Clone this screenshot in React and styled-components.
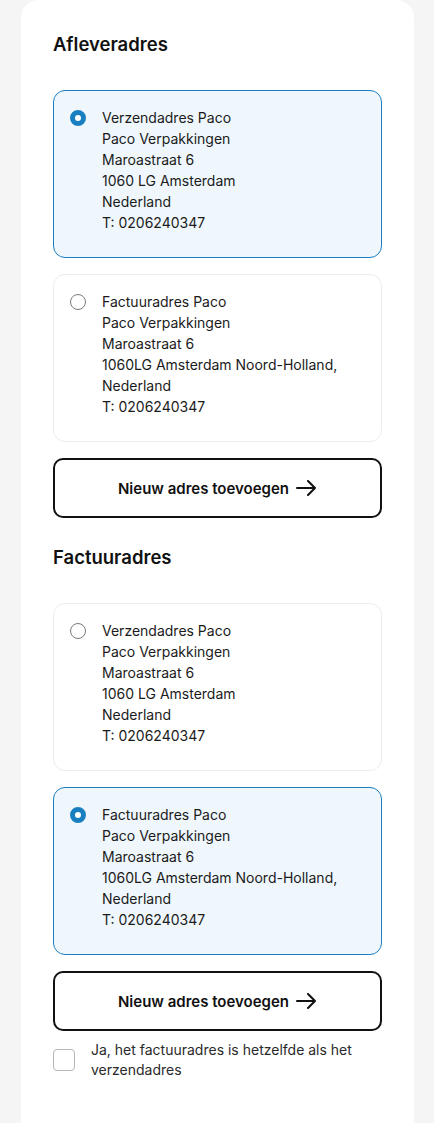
import styled, { createGlobalStyle } from 'styled-components'

const GlobalStyle = createGlobalStyle`
    body {
        margin: 0;
        background: #f5f5f5;
        font-family: Inter, "Noto Sans", sans-serif;
        color: #1b1b1b;
    }
`

const Page = styled.div`
    padding: 0 20px 0 21px;
`

const Card = styled.div`
    background: #fff;
    border-radius: 18px 18px 0 0;
    padding: 32px 32px 48px;
    display: flex;
    flex-direction: column;
`

const Heading = styled.h2`
    margin: 0 0 34px;
    font-size: 18.5px;
    line-height: 24px;
    font-weight: 600;
    color: #111;
`

const OptionList = styled.div`
    display: flex;
    flex-direction: column;
    gap: 16px;
`

const Option = styled.label`
    display: flex;
    gap: 16px;
    padding: 16px 16px 24px 16px;
    border: 1px solid ${p => (p.$selected ? '#1a7fc1' : '#ececec')};
    background: ${p => (p.$selected ? '#eff7fd' : '#fff')};
    border-radius: 12px;
    cursor: pointer;
`

const Radio = styled.span`
    flex: none;
    box-sizing: border-box;
    width: 16px;
    height: 16px;
    margin-top: 3px;
    border-radius: 50%;
    border: ${p => (p.$checked ? '5px solid #1a7fc1' : '1px solid #7a7a7a')};
    background: #fff;
`

const Address = styled.div`
    font-size: 14px;
    line-height: 21px;
    color: #1b1b1b;
`

const AddButton = styled.button`
    margin: 16px 0 0;
    height: 60px;
    width: 100%;
    display: flex;
    align-items: center;
    justify-content: center;
    gap: 6px;
    background: #fff;
    border: 2px solid #111;
    border-radius: 10px;
    font-family: inherit;
    font-size: 15px;
    font-weight: 600;
    color: #111;
    cursor: pointer;
`

const Section = styled.section`
    display: flex;
    flex-direction: column;
    & + & {
        margin-top: 27px;
    }
`

const CheckRow = styled.label`
    margin-top: 9px;
    display: flex;
    align-items: center;
    gap: 16px;
    font-size: 14px;
    line-height: 20px;
    color: #2a2a2a;
`

const CheckBox = styled.span`
    flex: none;
    box-sizing: border-box;
    width: 22px;
    height: 22px;
    border: 1px solid #b5b5b5;
    border-radius: 4px;
    background: #fff;
`

const Arrow = () => (
    <svg width="22" height="16" viewBox="0 0 22 16" fill="none" stroke="#111" strokeWidth="2" strokeLinecap="round" strokeLinejoin="round">
        <path d="M2 8h18M13 1l7 7-7 7" />
    </svg>
)

const shipping = ['Verzendadres Paco', 'Paco Verpakkingen', 'Maroastraat 6', '1060 LG Amsterdam', 'Nederland', 'T: 0206240347']
const billing = ['Factuuradres Paco', 'Paco Verpakkingen', 'Maroastraat 6', '1060LG Amsterdam Noord-Holland,', 'Nederland', 'T: 0206240347']

function AddressOption({ lines, selected }) {
    return (
        <Option $selected={selected}>
            <Radio $checked={selected} />
            <Address>
                {lines.map(l => (
                    <div key={l}>{l}</div>
                ))}
            </Address>
        </Option>
    )
}

function App() {
    return (
        <Page>
            <GlobalStyle />
            <Card>
                <Section>
                    <Heading>Afleveradres</Heading>
                    <OptionList>
                        <AddressOption lines={shipping} selected />
                        <AddressOption lines={billing} />
                    </OptionList>
                    <AddButton>Nieuw adres toevoegen <Arrow /></AddButton>
                </Section>
                <Section>
                    <Heading>Factuuradres</Heading>
                    <OptionList>
                        <AddressOption lines={shipping} />
                        <AddressOption lines={billing} selected />
                    </OptionList>
                    <AddButton>Nieuw adres toevoegen <Arrow /></AddButton>
                    <CheckRow>
                        <CheckBox />
                        <span>Ja, het factuuradres is hetzelfde als het verzendadres</span>
                    </CheckRow>
                </Section>
            </Card>
        </Page>
    )
}

export default App
